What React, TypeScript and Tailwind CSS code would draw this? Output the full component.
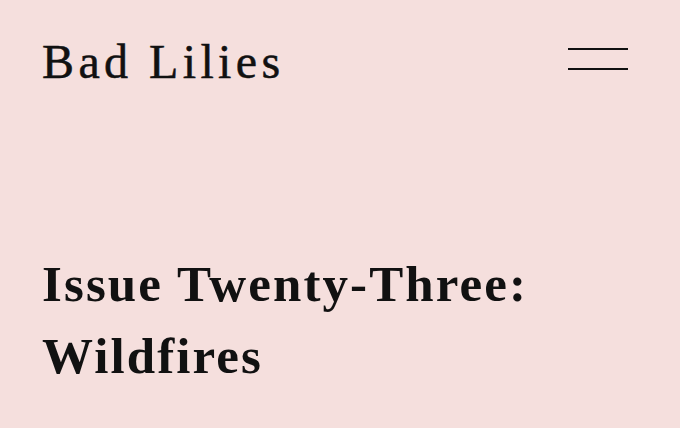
export default function App() {
  return (
    <div className="w-[680px] h-[428px] overflow-hidden bg-[#f5dfdd] text-[#111] font-['Liberation_Serif',serif]">
      <header className="flex items-start justify-between pl-[42px] pr-[52px] pt-[34px]">
        <h1 className="text-[48px] leading-[56px] tracking-[4.4px] [-webkit-text-stroke:0.5px_#111]">Bad Lilies</h1>
        <button className="mt-[14px] flex w-[60px] flex-col gap-[18px]" aria-label="Menu">
          <span className="block h-[2px] w-full bg-[#111]" />
          <span className="block h-[2px] w-full bg-[#111]" />
        </button>
      </header>
      <main className="pl-[42px] pt-[158px]">
        <h2 className="text-[51px] font-bold leading-[72px] tracking-[2.1px]">
          Issue Twenty-Three:
          <br />
          Wildfires
        </h2>
      </main>
    </div>
  );
}
